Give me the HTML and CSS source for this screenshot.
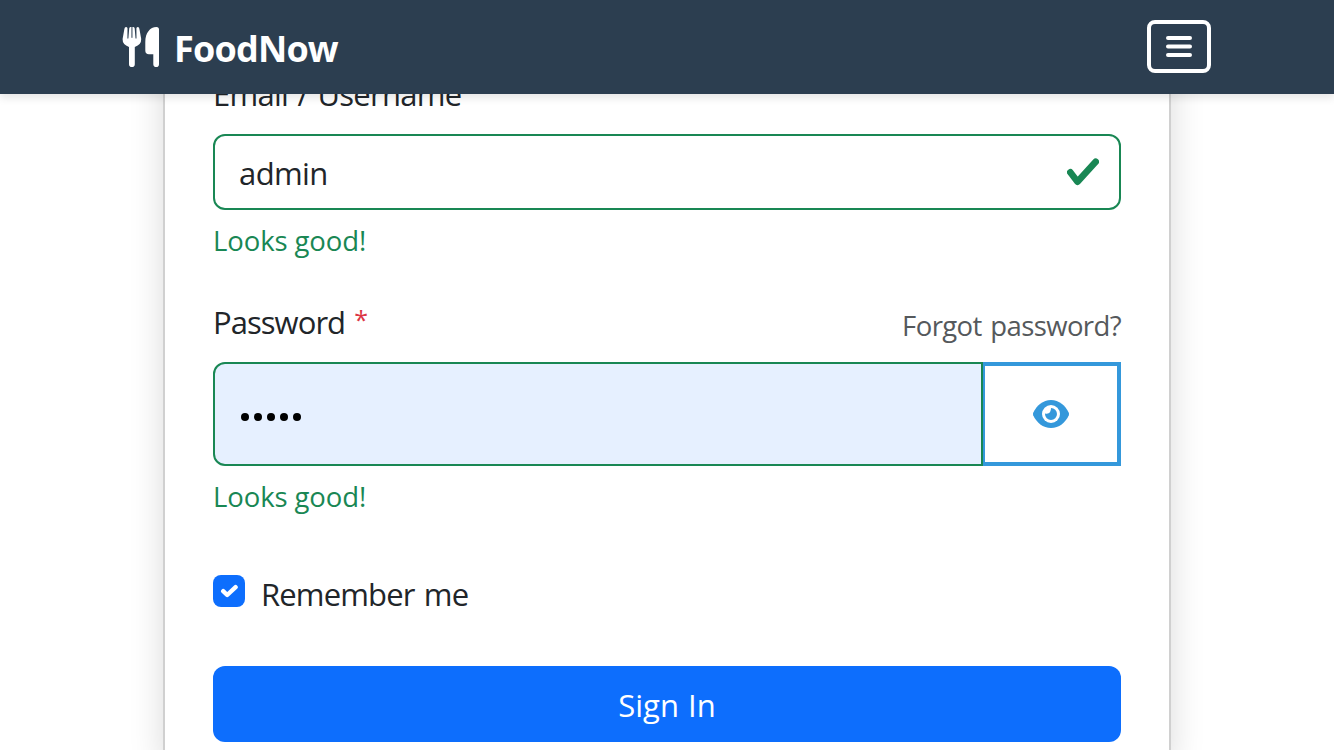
FILE: index.html
```html
<!DOCTYPE html>
<html lang="en">
<head>
<meta charset="utf-8">
<title>FoodNow</title>
<link rel="stylesheet" href="styles.css">
</head>
<body>
<header class="navbar">
  <a class="brand">
    <svg class="brand-icon" width="38" height="42" viewBox="0 0 38 42" fill="#fff"><path d="M4.200 1C2.800 1 2.500 2 2.100 4.500L.6 13Q.4 18.800 7 20.900V38.200Q7 41 9.900 41T12.800 38.200V20.900Q19.400 18.800 19.200 13L17.700 4.500C17.300 2 17 1 15.700 1Q14.400 1 14.400 2.500L14.500 12.300Q14 13 13.500 12.300L12.700 2.500Q12.600 1 11.400 1H8.500Q7.300 1 7.200 2.500L6.400 12.300Q5.900 13 5.400 12.300L5.500 2.500Q5.500 1 4.200 1Z"/><path d="M9.950 1V11.800" stroke="#2c3e50" stroke-width="1"/><path d="M34.500 1Q37 1 37 3.500V38.200Q37 41 34.200 41T31.300 38.200V28.300H27Q23.300 28.300 23.300 24.500V16C23.300 7 28 1 34.500 1Z"/></svg>
    <span class="brand-name">FoodNow</span>
  </a>
  <button class="toggler" aria-label="Menu">
    <svg width="26" height="22" viewBox="0 0 26 22" stroke="#fff" stroke-width="4" stroke-linecap="round"><path d="M2 2h22M2 10.500h22M2 19h22"/></svg>
  </button>
</header>
<main class="page">
  <form class="card">
    <label class="label"><span class="t-email">Email / Username</span></label>
    <div class="field">
      <span class="t-admin">admin</span>
      <svg class="check" width="32" height="28" viewBox="0 0 32 28" fill="none" stroke="#198754" stroke-width="6.600" stroke-linecap="round" stroke-linejoin="round"><path d="M3.300 14.300L10.500 23.700L28.700 3.800"/></svg>
    </div>
    <div class="feedback"><span class="t-good">Looks good!</span></div>
    <div class="label-row">
      <label class="label"><span class="t-pass">Password</span><span class="required">*</span></label>
      <a class="forgot">Forgot password?</a>
    </div>
    <div class="group">
      <div class="password"><i class="dot"></i><i class="dot"></i><i class="dot"></i><i class="dot"></i><i class="dot"></i></div>
      <button type="button" class="reveal" aria-label="Show password">
        <svg width="36" height="28" viewBox="0 0 36 28"><path fill="#3498db" d="M18 0C26 0 32.500 5.500 35.800 12.800Q36.200 14 35.800 15.200C32.500 22.500 26 28 18 28S3.500 22.500.2 15.200Q-.2 14 .2 12.800C3.500 5.500 10 0 18 0Z"/><circle cx="18" cy="14" r="9" fill="#fff"/><path fill="#3498db" d="M18 8A6 6 0 1 1 12 14Q12 13.600 12.100 13.500Q18 14.800 18 8Z"/></svg>
      </button>
    </div>
    <div class="feedback"><span class="t-good">Looks good!</span></div>
    <label class="remember">
      <span class="box"><svg width="18" height="14" viewBox="0 0 18 14" fill="none" stroke="#fff" stroke-width="4.400" stroke-linecap="round" stroke-linejoin="round"><path d="M3.200 7.200L7.200 11L15.600 3.200"/></svg></span>
      <span class="t-remember">Remember me</span>
    </label>
    <button type="button" class="submit"><span class="t-sign">Sign In</span></button>
  </form>
</main>
</body>
</html>
```
FILE: styles.css
```css
* { box-sizing: border-box; }
body {
  margin: 0;
  height: 750px;
  overflow: hidden;
  background: #fff;
  color: #212529;
  font: 31px/48px "Open Sans", "Noto Sans", sans-serif;
}
button { font: inherit; margin: 0; cursor: pointer; }
.navbar {
  position: relative;
  z-index: 2;
  display: flex;
  justify-content: space-between;
  align-items: center;
  height: 94px;
  padding: 0 123px 1px 122px;
  background: #2c3e50;
  box-shadow: 0 4px 8px rgba(0, 0, 0, .1);
}
.brand { display: flex; align-items: center; gap: 14px; color: #fff; }
.brand-name { font-size: 36px; font-weight: 700; line-height: 48px; padding-top: 4px; letter-spacing: -.8px; }
.toggler {
  display: flex;
  align-items: center;
  justify-content: center;
  width: 64px;
  height: 53px;
  padding: 0;
  border: 4px solid #fff;
  border-radius: 8px;
  background: none;
}
.page { display: flex; justify-content: center; height: 656px; }
.card {
  width: 1008px;
  height: 728px;
  flex: none;
  margin-top: -72px;
  padding: 46px 48px 0;
  border: 2px solid #d0d0d0;
  border-bottom: 0;
  background: #fff;
  box-shadow: 0 16px 32px rgba(0, 0, 0, .15);
}
.label { display: flex; height: 48px; margin-bottom: 16px; }
.t-email { letter-spacing: -.73px; word-spacing: 2px; }
.t-pass { letter-spacing: -.95px; }
.t-remember { letter-spacing: -.85px; word-spacing: 2px; margin-top: -1px; }
.t-sign { word-spacing: 1px; }
.field {
  display: flex;
  align-items: center;
  justify-content: space-between;
  height: 76px;
  padding: 0 20px 0 24px;
  border: 2px solid #198754;
  border-radius: 12px;
}
.t-admin { padding-top: 2px; letter-spacing: -.6px; }
.feedback { margin-top: 8px; height: 42px; line-height: 46px; font-size: 27.5px; letter-spacing: -.1px; color: #198754; }
.label-row { display: flex; justify-content: space-between; margin-top: 38px; }
.required { margin: -3px 0 0 9px; color: #dc3545; font-size: 25px; }
.forgot { font-size: 27.5px; color: #55595c; padding-top: 4px; letter-spacing: -.6px; word-spacing: 2px; }
.group { display: flex; height: 104px; }
.password {
  display: flex;
  align-items: center;
  gap: 5px;
  width: 770px;
  padding: 6px 0 0 26px;
  border: 2px solid #198754;
  border-radius: 12px 0 0 12px;
  background: #e6f0ff;
}
.dot { width: 8px; height: 8px; border-radius: 50%; background: #000; }
.reveal {
  display: flex;
  align-items: center;
  justify-content: center;
  flex: 1;
  padding: 0;
  border: 4px solid #3498db;
  border-left-width: 2px;
  background: #fff;
}
.remember { display: flex; height: 48px; margin-top: 55px; gap: 16px; }
.box {
  display: flex;
  align-items: center;
  justify-content: center;
  width: 32px;
  height: 32px;
  margin-top: 4px;
  border-radius: 8px;
  background: #0d6efd;
}
.submit {
  display: block;
  width: 100%;
  height: 76px;
  margin-top: 47px;
  padding: 2px 0 0;
  border: 0;
  border-radius: 12px;
  background: #0d6efd;
  color: #fff;
}
```
